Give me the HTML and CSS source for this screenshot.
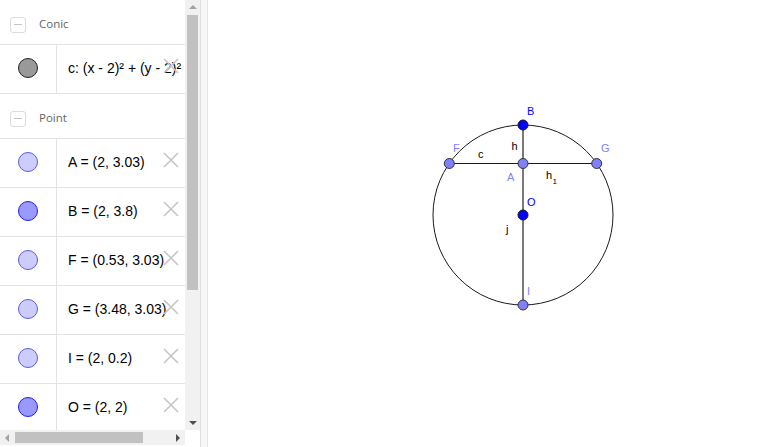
FILE: index.html
```html
<!DOCTYPE html>
<html>
<head>
<meta charset="utf-8">
<link rel="stylesheet" href="styles.css">
</head>
<body>
<div class="app">
  <div class="sidebar">
    <div class="list-col">
      <div class="list">
        <div class="group-header"><span class="toggle"><span class="minus"></span></span><span class="group-name">Conic</span></div>
        <div class="item">
          <div class="marker"><span class="dot dot-conic"></span></div>
          <div class="def">c: (x - 2)² + (y - 2)²</div>
          <svg class="del" width="16" height="16" viewBox="0 0 16 16"><path d="M1 1L15 15M15 1L1 15"/></svg>
        </div>
        <div class="group-header"><span class="toggle"><span class="minus"></span></span><span class="group-name">Point</span></div>
        <div class="item">
          <div class="marker"><span class="dot dot-light"></span></div>
          <div class="def">A = (2, 3.03)</div>
          <svg class="del" width="16" height="16" viewBox="0 0 16 16"><path d="M1 1L15 15M15 1L1 15"/></svg>
        </div>
        <div class="item">
          <div class="marker"><span class="dot dot-dark"></span></div>
          <div class="def">B = (2, 3.8)</div>
          <svg class="del" width="16" height="16" viewBox="0 0 16 16"><path d="M1 1L15 15M15 1L1 15"/></svg>
        </div>
        <div class="item">
          <div class="marker"><span class="dot dot-light"></span></div>
          <div class="def">F = (0.53, 3.03)</div>
          <svg class="del" width="16" height="16" viewBox="0 0 16 16"><path d="M1 1L15 15M15 1L1 15"/></svg>
        </div>
        <div class="item">
          <div class="marker"><span class="dot dot-light"></span></div>
          <div class="def">G = (3.48, 3.03)</div>
          <svg class="del" width="16" height="16" viewBox="0 0 16 16"><path d="M1 1L15 15M15 1L1 15"/></svg>
        </div>
        <div class="item">
          <div class="marker"><span class="dot dot-light"></span></div>
          <div class="def">I = (2, 0.2)</div>
          <svg class="del" width="16" height="16" viewBox="0 0 16 16"><path d="M1 1L15 15M15 1L1 15"/></svg>
        </div>
        <div class="item">
          <div class="marker"><span class="dot dot-dark"></span></div>
          <div class="def">O = (2, 2)</div>
          <svg class="del" width="16" height="16" viewBox="0 0 16 16"><path d="M1 1L15 15M15 1L1 15"/></svg>
        </div>
      </div>
      <div class="hscroll">
        <span class="arrow arrow-left"></span>
        <div class="htrack"><div class="hthumb"></div></div>
        <span class="arrow arrow-right"></span>
      </div>
    </div>
    <div class="vscroll">
      <span class="arrow arrow-up"></span>
      <div class="vtrack"><div class="vthumb"></div></div>
      <span class="arrow arrow-down"></span>
    </div>
  </div>
  <div class="divider"></div>
  <div class="canvas">
    <svg class="graph" width="570" height="447" viewBox="208 0 570 447">
      <circle cx="523" cy="215" r="90" fill="none" stroke="#1a1a1a" stroke-width="1"/>
      <line x1="449" y1="163.5" x2="597" y2="163.5" stroke="#1a1a1a" stroke-width="1"/>
      <line x1="523" y1="125" x2="523" y2="305" stroke="#7a7a7a" stroke-width="2"/>
      <g class="pt-light">
        <circle cx="449.3" cy="163.5" r="5"/>
        <circle cx="596.7" cy="163.5" r="5"/>
        <circle cx="523" cy="163.5" r="5"/>
        <circle cx="523" cy="305" r="5"/>
      </g>
      <g class="pt-dark">
        <circle cx="523" cy="125" r="5"/>
        <circle cx="523" cy="215" r="5"/>
      </g>
      <g class="lbl lbl-dark">
        <text x="527" y="115">B</text>
        <text x="527" y="205.5">O</text>
      </g>
      <g class="lbl lbl-light">
        <text x="453" y="152">F</text>
        <text x="601" y="152">G</text>
        <text x="507" y="180.5">A</text>
        <text x="527" y="294.5">I</text>
      </g>
      <g class="lbl lbl-black">
        <text x="478" y="157.5">c</text>
        <text x="511.5" y="149.5">h</text>
        <text x="546" y="178.5">h</text>
        <text class="sub" x="552.5" y="184">1</text>
        <text x="506" y="233">j</text>
      </g>
    </svg>
  </div>
</div>
</body>
</html>
```
FILE: styles.css
```css
html, body {
  margin: 0;
  padding: 0;
  background: #ffffff;
}

.app {
  display: flex;
  width: 778px;
  height: 447px;
  overflow: hidden;
}

.sidebar {
  display: flex;
  width: 200px;
  height: 447px;
  flex: none;
}

.list-col {
  display: flex;
  flex-direction: column;
  width: 185px;
}

.list {
  height: 430px;
  overflow: hidden;
  flex: none;
}

.group-header {
  display: flex;
  align-items: center;
  gap: 13px;
  padding: 2px 0 0 10px;
  box-sizing: border-box;
  height: 45px;
  border-bottom: 1px solid #e3e3e3;
}

.toggle {
  display: flex;
  align-items: center;
  justify-content: center;
  width: 16px;
  height: 16px;
  box-sizing: border-box;
  border: 1px solid #dcdcdc;
  border-radius: 3px;
  margin-top: 3px;
}

.minus {
  width: 8px;
  height: 1px;
  background: #c4c4c4;
}

.group-name {
  font-family: "Open Sans", "Liberation Sans", sans-serif;
  font-size: 11.5px;
  color: #666666;
}

.item {
  position: relative;
  display: flex;
  height: 49px;
  box-sizing: border-box;
  border-bottom: 1px solid #e3e3e3;
}

.marker {
  display: flex;
  align-items: center;
  justify-content: center;
  width: 57px;
  box-sizing: border-box;
  border-right: 1px solid #e3e3e3;
  padding: 0 1px 3px 0;
  flex: none;
}

.dot {
  width: 20px;
  height: 20px;
  box-sizing: border-box;
  border-radius: 50%;
  border: 1px solid #333;
}

.dot-conic {
  background: #999999;
  border-color: #222222;
}

.dot-light {
  background: #ccccff;
  border-color: #5c5cd6;
}

.dot-dark {
  background: #9999ff;
  border-color: #1f1fe6;
}

.def {
  display: flex;
  align-items: center;
  padding: 0 0 2px 11px;
  white-space: nowrap;
  font-family: "Liberation Sans", Arial, sans-serif;
  font-size: 14px;
  color: #000000;
}

.del {
  position: absolute;
  left: 163px;
  top: 13px;
}

.del path {
  stroke: #c6c6c6;
  stroke-width: 1.6;
  fill: none;
}

.hscroll {
  display: flex;
  align-items: center;
  height: 15px;
  background: #f1f1f1;
  flex: none;
}

.htrack {
  flex: 1;
  height: 15px;
  display: flex;
  align-items: center;
}

.hthumb {
  width: 128px;
  height: 11px;
  background: #c1c1c1;
}

.vscroll {
  display: flex;
  flex-direction: column;
  align-items: center;
  width: 15px;
  height: 430px;
  background: #f1f1f1;
}

.vtrack {
  flex: 1;
  width: 15px;
  display: flex;
  justify-content: center;
}

.vthumb {
  width: 11px;
  height: 275px;
  background: #c1c1c1;
}

.arrow {
  width: 15px;
  height: 15px;
  flex: none;
  position: relative;
}

.arrow::after {
  content: "";
  position: absolute;
  width: 0;
  height: 0;
  border-style: solid;
}

.arrow-up::after {
  left: 4px;
  top: 5px;
  border-width: 0 4px 4px 4px;
  border-color: transparent transparent #a3a3a3 transparent;
}

.arrow-down::after {
  left: 4px;
  top: 6px;
  border-width: 4px 4px 0 4px;
  border-color: #505050 transparent transparent transparent;
}

.arrow-left::after {
  left: 5px;
  top: 4px;
  border-width: 4px 4px 4px 0;
  border-color: transparent #a3a3a3 transparent transparent;
}

.arrow-right::after {
  left: 6px;
  top: 4px;
  border-width: 4px 0 4px 4px;
  border-color: transparent transparent transparent #505050;
}

.divider {
  width: 8px;
  height: 447px;
  box-sizing: border-box;
  background: #f7f7f7;
  border-left: 1px solid #dedede;
  border-right: 1px solid #e6e6e6;
  flex: none;
}

.canvas {
  flex: 1;
  height: 447px;
  background: #ffffff;
}

.graph {
  display: block;
}

.pt-light circle {
  fill: #7f7fff;
  stroke: #333333;
  stroke-width: 1;
}

.pt-dark circle {
  fill: #0000ff;
  stroke: #1a1a1a;
  stroke-width: 1;
}

.lbl text {
  font-family: "Liberation Sans", Arial, sans-serif;
  font-size: 11px;
}

.lbl-dark text {
  fill: #0000ff;
}

.lbl-light text {
  fill: #7f7fff;
}

.lbl-black text {
  fill: #000000;
}

.lbl .sub {
  font-size: 8px;
}
```
